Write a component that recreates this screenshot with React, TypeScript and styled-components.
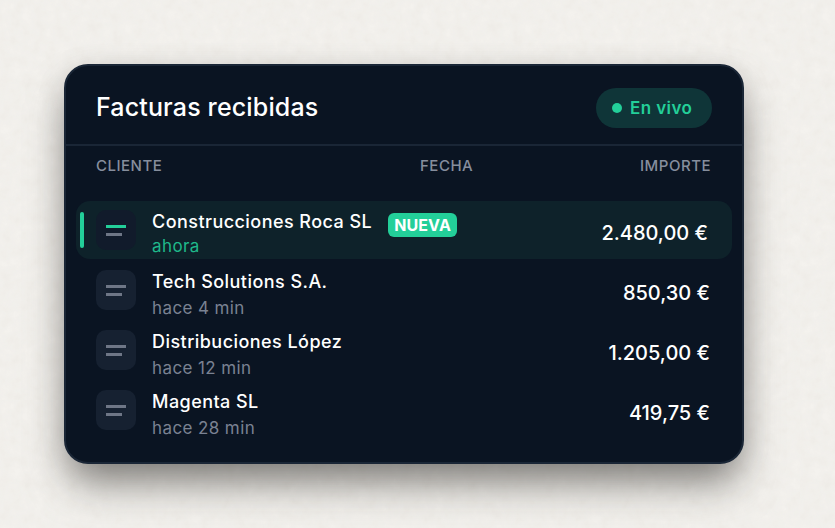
import React from 'react'
import styled, { createGlobalStyle } from 'styled-components'

const NOISE =
  "data:image/svg+xml,%3Csvg xmlns='http://www.w3.org/2000/svg' width='400' height='400'%3E%3Cfilter id='n'%3E%3CfeTurbulence type='fractalNoise' baseFrequency='0.09' numOctaves='4' stitchTiles='stitch'/%3E%3CfeColorMatrix values='0 0 0 0 0.45 0 0 0 0 0.42 0 0 0 0 0.38 0 0 0 0.12 -0.02'/%3E%3C/filter%3E%3Crect width='400' height='400' filter='url(%23n)'/%3E%3C/svg%3E"

const GlobalStyle = createGlobalStyle`
  html, body {
    margin: 0;
    height: 100%;
    overflow: hidden;
  }
  body {
    background-color: #f4f2ee;
    background-image: url("${NOISE}");
    font-family: Inter, 'Noto Sans', sans-serif;
  }
`

const SPage = styled.div`
  padding: 64px 0 0 64px;
`

const SCard = styled.section`
  box-sizing: border-box;
  width: 680px;
  height: 400px;
  background: #0a1422;
  border: 2px solid #1a2636;
  border-radius: 24px;
  box-shadow: 0 24px 40px -6px rgba(30, 28, 24, 0.5), 0 6px 30px rgba(30, 28, 24, 0.12);
`

const SHeader = styled.header`
  height: 80px;
  box-sizing: border-box;
  padding: 0 30px;
  display: flex;
  align-items: center;
  justify-content: space-between;
  border-bottom: 2px solid #1a2636;
`

const STitle = styled.h1`
  margin: 0;
  padding-top: 5px;
  font: 500 25px/1 Inter, sans-serif;
  letter-spacing: 0.15px;
  color: #fff;
`

const SLive = styled.div`
  width: 116px;
  height: 40px;
  margin-top: 6px;
  box-sizing: border-box;
  padding-left: 16px;
  border-radius: 20px;
  background: #0f3538;
  display: flex;
  align-items: center;
  gap: 8px;
  font: 600 17px/1 Inter, sans-serif;
  letter-spacing: 0.4px;
  color: #23cf99;
`

const SDot = styled.span`
  width: 10px;
  height: 10px;
  border-radius: 50%;
  background: #23cf99;
`

const SColumns = styled.div`
  display: grid;
  grid-template-columns: 324px 1fr auto;
  padding: 11px 31px 0 30px;
  height: 55px;
  box-sizing: border-box;
  font: 500 15px/17px Inter, sans-serif;
  letter-spacing: 0.5px;
  color: #868e9d;
`

const SList = styled.div`
  padding: 0 10px;
  display: flex;
  flex-direction: column;
  gap: 2px;
`

const SRow = styled.div<{ $fresh?: boolean }>`
  position: relative;
  height: 58px;
  box-sizing: border-box;
  padding: 0 ${(p) => (p.$fresh ? 24 : 22)}px 0 20px;
  border-radius: 14px;
  background: ${(p) => (p.$fresh ? '#0e222a' : 'transparent')};
  display: flex;
  align-items: center;
`

const SAccent = styled.span`
  position: absolute;
  left: 4px;
  top: 11px;
  width: 4px;
  height: 36px;
  border-radius: 2px;
  background: #23cf99;
`

const SIcon = styled.div<{ $fresh?: boolean }>`
  width: 40px;
  height: 40px;
  flex: none;
  border-radius: 10px;
  background: ${(p) => (p.$fresh ? '#111b2b' : '#162131')};
  display: flex;
  flex-direction: column;
  justify-content: center;
  gap: 5px;
  padding-left: 10px;
  box-sizing: border-box;

  i {
    display: block;
    height: 3px;
    background: #6e7686;
  }
  i:first-child {
    width: 20px;
    background: ${(p) => (p.$fresh ? '#23cf99' : '#6e7686')};
  }
  i:last-child {
    width: 16px;
  }
`

const SText = styled.div<{ $fresh?: boolean }>`
  margin-left: 16px;
  padding-top: ${(p) => (p.$fresh ? 6 : 9)}px;
  display: flex;
  flex-direction: column;
  gap: ${(p) => (p.$fresh ? 3 : 5)}px;
`

const SName = styled.div`
  font: 500 18px/22px Inter, sans-serif;
  letter-spacing: 0.45px;
  color: #fff;
`

const SWhen = styled.div<{ $fresh?: boolean }>`
  font: 400 17px/20px Inter, sans-serif;
  letter-spacing: 0.4px;
  color: ${(p) => (p.$fresh ? '#1fb88a' : '#7a8292')};
`

const SBadge = styled.span`
  margin-left: 16px;
  align-self: center;
  transform: translateY(-5px);
  padding: 0 6px;
  height: 24px;
  border-radius: 6px;
  background: #23cf99;
  font: 700 16px/25px Inter, sans-serif;
  letter-spacing: 0.1px;
  color: #fff;
`

const SAmount = styled.div`
  margin-left: auto;
  padding-top: 6px;
  font: 500 20px/1 Inter, sans-serif;
  color: #fff;
`

const INVOICES = [
  { name: 'Construcciones Roca SL', when: 'ahora', amount: '2.480,00 €', fresh: true },
  { name: 'Tech Solutions S.A.', when: 'hace 4 min', amount: '850,30 €' },
  { name: 'Distribuciones López', when: 'hace 12 min', amount: '1.205,00 €' },
  { name: 'Magenta SL', when: 'hace 28 min', amount: '419,75 €' },
]

export default function App(): React.ReactElement {
  return (
    <SPage>
      <GlobalStyle />
      <SCard>
        <SHeader>
          <STitle>Facturas recibidas</STitle>
          <SLive>
            <SDot />
            En vivo
          </SLive>
        </SHeader>
        <SColumns>
          <span>CLIENTE</span>
          <span>FECHA</span>
          <span>IMPORTE</span>
        </SColumns>
        <SList>
          {INVOICES.map((invoice) => (
            <SRow key={invoice.name} $fresh={invoice.fresh}>
              {invoice.fresh && <SAccent />}
              <SIcon $fresh={invoice.fresh}>
                <i />
                <i />
              </SIcon>
              <SText $fresh={invoice.fresh}>
                <SName>{invoice.name}</SName>
                <SWhen $fresh={invoice.fresh}>{invoice.when}</SWhen>
              </SText>
              {invoice.fresh && <SBadge>NUEVA</SBadge>}
              <SAmount>{invoice.amount}</SAmount>
            </SRow>
          ))}
        </SList>
      </SCard>
    </SPage>
  )
}
